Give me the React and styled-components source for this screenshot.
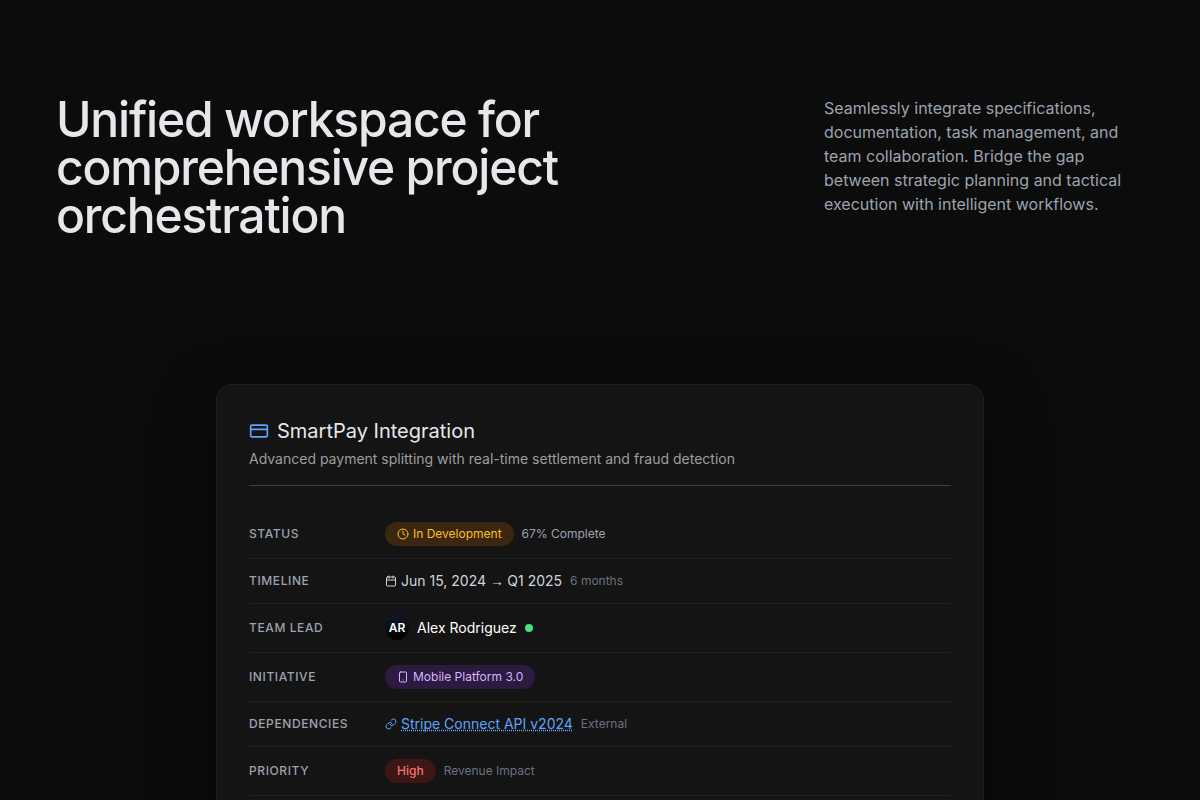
import React from 'react';
import styled, { createGlobalStyle, css } from 'styled-components';
import { CreditCard, Clock, Calendar, Smartphone, Link } from 'lucide-react';

const GlobalStyle = createGlobalStyle`
  *, *::before, *::after { box-sizing: border-box; }
  body {
    margin: 0;
    background: #0c0c0c;
    color: #fff;
    font-family: Inter, "Liberation Sans", sans-serif;
    overflow: hidden;
  }
`;

const Page = styled.main`
  height: 800px;
  overflow: hidden;
  padding: 96px 56px 0;
`;

const Hero = styled.header`
  display: flex;
  justify-content: space-between;
  align-items: flex-start;
  height: 144px;
  margin-bottom: 144px;
`;

const Heading = styled.h1`
  margin: 0;
  width: 576px;
  font-size: 48px;
  line-height: 46.6px;
  font-weight: 500;
  letter-spacing: -0.025em;
  color: #e5e7eb;
  transform: translateY(-0.4px) scaleY(1.03);
  transform-origin: top left;
`;

const Lead = styled.p`
  margin: 0;
  width: 320px;
  font-size: 16px;
  line-height: 24px;
  color: #9ca3af;
`;

const Card = styled.section`
  width: 768px;
  margin: 0 auto;
  padding: 32px;
  background: #141414;
  border: 1px solid #1f1f1f;
  border-radius: 16px;
  box-shadow: 0 20px 60px rgba(0, 0, 0, 0.5);
`;

const CardHeader = styled.div`
  padding-bottom: 16px;
  margin-bottom: 24px;
  border-bottom: 1px solid #374151;
`;

const CardTitle = styled.h2`
  display: flex;
  align-items: center;
  gap: 8px;
  margin: 0 0 4px;
  font-size: 20px;
  line-height: 28px;
  font-weight: 400;
  color: #e5e7eb;

  svg { color: #60a5fa; }
`;

const CardSubtitle = styled.p`
  margin: 0;
  font-size: 14px;
  line-height: 20px;
  color: #9e9e9e;
`;

const Row = styled.div`
  display: flex;
  align-items: center;
  padding: 12px 0;
  border-bottom: 1px solid #1f1f1f;
`;

const Label = styled.div`
  width: 136px;
  font-size: 12px;
  line-height: 16px;
  font-weight: 500;
  letter-spacing: 0.05em;
  text-transform: uppercase;
  color: #9ca3af;
`;

const Value = styled.div`
  display: flex;
  align-items: center;
  gap: 8px;
  font-size: 14px;
  line-height: 20px;
  color: ${(p) => p.$color || '#d1d5db'};
`;

const IconText = styled.span`
  display: inline-flex;
  align-items: center;
  gap: 4px;
`;

const Arrow = styled.span`
  margin-right: -0.6px;
  font-family: "Liberation Sans", sans-serif;
  line-height: 1;
`;

const tones = {
  amber: css`background: #3b2711; color: #fbbf24;`,
  purple: css`background: #2d1a40; color: #d8b4fe;`,
  red: css`background: #3d1616; color: #f87171;`,
};

const Badge = styled(IconText)`
  padding: 4px 12px;
  border-radius: 999px;
  font-size: 12px;
  line-height: 16px;
  font-weight: ${(p) => p.$weight || 400};
  ${(p) => tones[p.$tone]}
`;

const Note = styled.span`
  font-size: 12px;
  line-height: 16px;
  color: ${(p) => (p.$bright ? '#9ca3af' : '#6b7280')};
`;

const Avatar = styled.span`
  display: flex;
  align-items: center;
  justify-content: center;
  width: 24px;
  height: 24px;
  border-radius: 50%;
  background: linear-gradient(#0f172a, #000);
  font-size: 12px;
  line-height: 16px;
  font-weight: 600;
  color: #fff;
`;

const OnlineDot = styled.span`
  width: 8px;
  height: 8px;
  border-radius: 50%;
  background: #4ade80;
`;

const DocLink = styled(IconText)`
  color: #60a5fa;

  span {
    text-decoration: underline dotted;
    text-decoration-skip-ink: none;
    text-underline-offset: 1px;
  }
`;

export default function App() {
  return (
    <>
      <GlobalStyle />
      <Page>
        <Hero>
          <Heading>Unified workspace for comprehensive project orchestration</Heading>
          <Lead>
            Seamlessly integrate specifications, documentation, task management, and team
            collaboration. Bridge the gap between strategic planning and tactical execution with
            intelligent workflows.
          </Lead>
        </Hero>
        <Card>
          <CardHeader>
            <CardTitle><CreditCard size={20} />SmartPay Integration</CardTitle>
            <CardSubtitle>
              Advanced payment splitting with real-time settlement and fraud detection
            </CardSubtitle>
          </CardHeader>
          <Row>
            <Label>Status</Label>
            <Value>
              <Badge $tone="amber"><Clock size={12} />In Development</Badge>
              <Note $bright>67% Complete</Note>
            </Value>
          </Row>
          <Row>
            <Label>Timeline</Label>
            <Value>
              <IconText>
                <Calendar size={12} />
                <span>Jun 15, 2024 <Arrow>→</Arrow> Q1 2025</span>
              </IconText>
              <Note>6 months</Note>
            </Value>
          </Row>
          <Row>
            <Label>Team Lead</Label>
            <Value $color="#fff">
              <Avatar>AR</Avatar>
              Alex Rodriguez
              <OnlineDot />
            </Value>
          </Row>
          <Row>
            <Label>Initiative</Label>
            <Value>
              <Badge $tone="purple"><Smartphone size={12} />Mobile Platform 3.0</Badge>
            </Value>
          </Row>
          <Row>
            <Label>Dependencies</Label>
            <Value>
              <DocLink><Link size={12} /><span>Stripe Connect API v2024</span></DocLink>
              <Note>External</Note>
            </Value>
          </Row>
          <Row>
            <Label>Priority</Label>
            <Value>
              <Badge $tone="red" $weight={500}>High</Badge>
              <Note>Revenue Impact</Note>
            </Value>
          </Row>
          <Row>
            <Label />
            <Value />
          </Row>
        </Card>
      </Page>
    </>
  );
}
